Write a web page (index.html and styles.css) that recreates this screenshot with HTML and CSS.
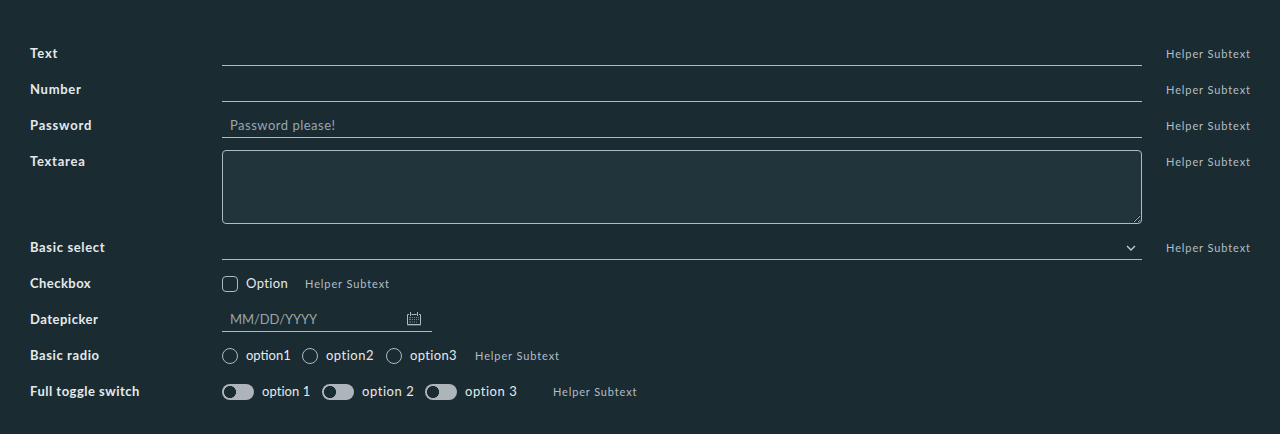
FILE: index.html
```
<!DOCTYPE html>
<html lang="en">
<head>
<meta charset="utf-8">
<title>Form</title>
<link rel="stylesheet" href="styles.css">
</head>
<body>
<form class="form">
  <div class="row"><label class="label label-text" for="text">Text</label><input class="input" id="text" type="text"><span class="helper">Helper Subtext</span></div>
  <div class="row"><label class="label label-number" for="number">Number</label><input class="input" id="number" type="text" inputmode="numeric"><span class="helper">Helper Subtext</span></div>
  <div class="row"><label class="label label-password" for="password">Password</label><input class="input input-password" id="password" type="password" placeholder="Password please!"><span class="helper">Helper Subtext</span></div>
  <div class="row row-area"><label class="label label-textarea" for="area">Textarea</label><textarea class="textarea" id="area"></textarea><span class="helper">Helper Subtext</span></div>
  <div class="row"><label class="label label-select">Basic select</label>
    <div class="input select"><svg width="10" height="6" viewBox="0 0 10 6"><path d="M1 1l4 4 4-4" fill="none" stroke="currentColor" stroke-width="1.3"/></svg></div>
    <span class="helper">Helper Subtext</span></div>
  <div class="row"><label class="label label-checkbox">Checkbox</label>
    <div class="options"><label class="option"><input class="check" type="checkbox"><span class="option-text cap">Option</span></label><span class="helper helper-check">Helper Subtext</span></div></div>
  <div class="row"><label class="label label-date" for="date">Datepicker</label>
    <div class="date"><input class="date-input" id="date" type="text" placeholder="MM/DD/YYYY">
      <svg class="calendar" width="16" height="16" viewBox="0 0 16 16"><path d="M3 3.500H1.500v10h13v-10H13M5.500 3.500h5" fill="none" stroke="currentColor"/><path d="M1 14h14" stroke="currentColor" opacity=".6"/><path d="M4.500 1v4M11.500 1v4" stroke="currentColor"/><path d="M3 6.500h2M6 6.500h1M8 6.500h1M10 6.500h1M12 6.500h1M3 8.500h2M6 8.500h1M8 8.500h1M10 8.500h1M12 8.500h1M3 11h2M6 11h1M8 11h1M10 11h1" stroke="currentColor" opacity=".6"/></svg></div></div>
  <div class="row"><label class="label label-radio">Basic radio</label>
    <div class="options"><label class="option radio-one"><input class="radio" type="radio" name="r"><span class="option-text r1">option1</span></label><label class="option radio-two"><input class="radio" type="radio" name="r"><span class="option-text r2">option2</span></label><label class="option"><input class="radio" type="radio" name="r"><span class="option-text r3">option3</span></label><span class="helper helper-radio">Helper Subtext</span></div></div>
  <div class="row"><label class="label label-toggle">Full toggle switch</label>
    <div class="options"><label class="option toggle-one"><input class="toggle" type="checkbox"><span class="option-text t1">option 1</span></label><label class="option toggle-two"><input class="toggle" type="checkbox"><span class="option-text t2">option 2</span></label><label class="option"><input class="toggle" type="checkbox"><span class="option-text t3">option 3</span></label><span class="helper helper-toggle">Helper Subtext</span></div></div>
</form>
</body>
</html>
```
FILE: styles.css
```
* { box-sizing: border-box; }
body { margin: 0; height: 434px; overflow: hidden; background: #1b2b32; color: #e3eaed; font: 13px/24px Lato, "Open Sans", sans-serif; }
.form { display: flex; flex-direction: column; gap: 12px; padding: 42px 30px 0; }
.row { display: flex; height: 24px; white-space: nowrap; }
.row-area { height: 74px; }
.label { flex: none; width: 192px; font-weight: 700; line-height: 22px; }
.label-text { letter-spacing: .9px; }
.label-number { letter-spacing: .7px; }
.label-password { letter-spacing: .8px; }
.label-textarea { letter-spacing: .75px; }
.label-select { letter-spacing: .65px; }
.label-checkbox { letter-spacing: .45px; }
.label-date { letter-spacing: .5px; }
.label-radio { letter-spacing: .6px; }
.label-toggle { letter-spacing: .5px; }
.input { width: 920px; height: 24px; flex: none; padding: 0 8px 1px; border: 0; border-bottom: 1px solid #adbbc4; border-radius: 0; background: transparent; color: inherit; font: inherit; line-height: 22px; outline: none; }
.input::placeholder, .date-input::placeholder { color: #9aa6ac; opacity: 1; }
.input-password { letter-spacing: .5px; }
.textarea { width: 920px; height: 74px; flex: none; margin: 0; border: 1px solid #adbbc4; border-radius: 4px; background: #21333b; color: inherit; color-scheme: dark; outline: none; }
.select { display: flex; align-items: center; justify-content: flex-end; padding: 0 6px 0 0; color: #c1cdd4; }
.helper { margin-left: 24px; color: #b3bec4; font-size: 11px; line-height: 23px; letter-spacing: .9px; }
.options { display: flex; align-items: center; }
.option { display: flex; align-items: center; gap: 8px; }
.option-text { height: 24px; line-height: 22px; }
.options .helper { height: 24px; line-height: 23px; }
.check, .radio, .toggle { appearance: none; flex: none; margin: 0; width: 16px; height: 16px; border: 1px solid #adbbc4; }
.check { border-radius: 4px; }
.radio { border-radius: 50%; }
.toggle { width: 32px; border: 0; border-radius: 8px; background: radial-gradient(circle at 8px 8px, #1b2b32 5.700px, #adb5bb 6.300px); }
.cap { width: 42px; letter-spacing: .35px; }
.r1 { width: 44px; letter-spacing: 0; }
.r2 { width: 48px; letter-spacing: .5px; }
.r3 { width: 47px; letter-spacing: .35px; }
.t1 { width: 48px; letter-spacing: .05px; }
.t2 { width: 52px; letter-spacing: .55px; }
.t3 { width: 52px; letter-spacing: .55px; }
.radio-one, .radio-two { margin-right: 12px; }
.toggle-one { margin-right: 12px; }
.toggle-two { margin-right: 11px; }
.helper-check { margin-left: 17px; }
.helper-radio { margin-left: 18px; }
.helper-toggle { margin-left: 36px; letter-spacing: .85px; }
.date { display: flex; align-items: center; width: 210px; padding: 0 10px 0 8px; border-bottom: 1px solid #adbbc4; }
.date-input { flex: 1; min-width: 0; height: 23px; padding: 0 0 1px; border: 0; outline: none; background: transparent; color: inherit; font: inherit; line-height: 22px; letter-spacing: -.1px; }
.calendar { flex: none; margin-bottom: 1px; color: #adbbc4; }
```
